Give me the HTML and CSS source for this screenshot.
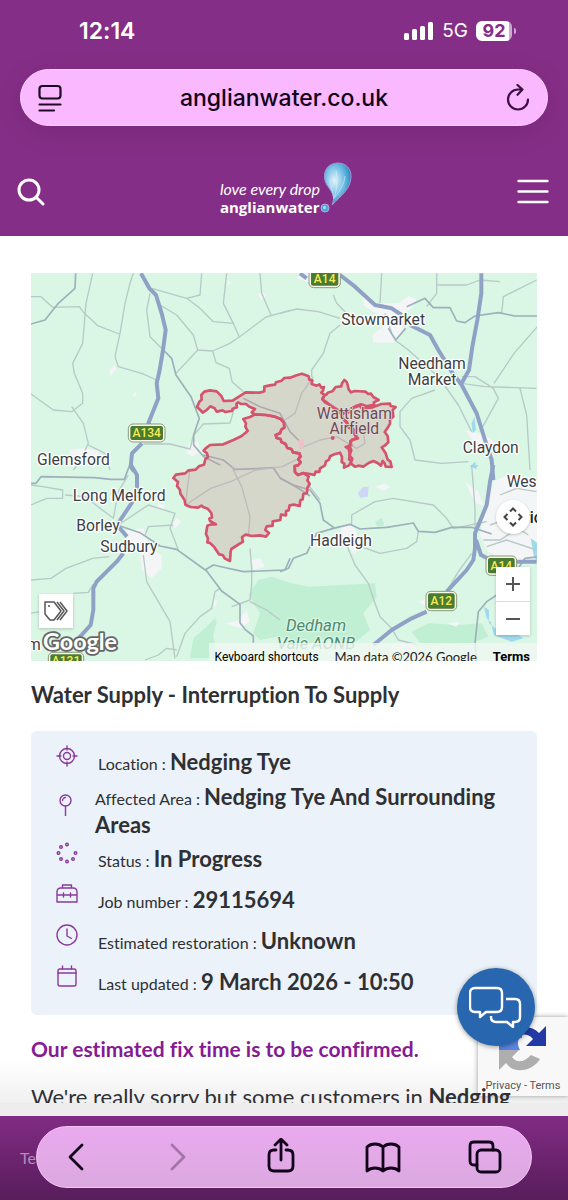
FILE: index.html
```html
<!DOCTYPE html>
<html lang="en">
<head>
  <meta charset="UTF-8">
  <meta name="viewport" content="width=device-width, initial-scale=1.0">
  <title>Water Supply - Interruption To Supply | Anglian Water</title>
  <link rel="stylesheet" href="styles.css">
</head>
<body>
  <div class="phone">
    <header class="top">
      <div class="status-bar">
        <span class="time">12:14</span>
        <div class="status-icons">
          <svg width="30" height="18" viewBox="0 0 30 18" fill="#fff"><rect y="11" width="5" height="7" rx="1.5"/><rect x="8" y="7" width="5" height="11" rx="1.5"/><rect x="16" y="4" width="5" height="14" rx="1.5"/><rect x="24" width="5" height="18" rx="1.5"/></svg>
          <span class="network">5G</span>
          <span class="battery">92</span>
        </div>
      </div>

      <div class="address-bar">
        <button class="icon-btn" aria-label="Page menu">
          <svg width="24" height="28" viewBox="0 0 24 28" fill="none" stroke="#1c0a20" stroke-width="2.2" stroke-linecap="round"><rect x="1.5" y="2" width="21" height="12.5" rx="3"/><path d="M1.5 20.500h21M1.5 26.500h14.5"/></svg>
        </button>
        <input class="url" type="text" value="anglianwater.co.uk" aria-label="Address">
        <button class="icon-btn" aria-label="Reload">
          <svg width="24" height="28" viewBox="0 0 24 28" fill="none" stroke="#3d1144" stroke-width="2.2" stroke-linecap="round" stroke-linejoin="round"><path d="M22 15.500a10 10 0 1 1-10-10h4M11.500 1l5 4.600-5 5.200"/></svg>
        </button>
      </div>

      <div class="site-nav">
        <button class="icon-btn" aria-label="Search">
          <svg width="28" height="28" viewBox="0 0 28 28" fill="none" stroke="#fff" stroke-width="3" stroke-linecap="round"><circle cx="12" cy="12" r="10"/><path d="M19.500 19.500L26 26"/></svg>
        </button>
        <a class="logo" href="#" aria-label="Anglian Water home">
          <span class="logo-text">
            <span class="logo-tag">love every drop</span>
            <span class="logo-name">anglianwater</span>
          </span>
          <svg class="drop" width="32" height="52" viewBox="0 0 32 52">
            <defs>
              <radialGradient id="drop" cx=".38" cy=".42" r=".6"><stop offset="0" stop-color="#e2f4fc"/><stop offset=".45" stop-color="#8dcbea"/><stop offset="1" stop-color="#2b93c9"/></radialGradient>
            </defs>
            <path d="M18 1C26 1 31.500 7 31 15c-.5 12-9 18-19 28 3-8 1-11-3-17C6 22 4 18 4.500 13 5 6 10 1 18 1z" fill="url(#drop)" stroke="#a98fd0"/>
            <path d="M10 16c0 9 3 13 4 21M16 9c2 10 1 18-2 27M25 14c-1 9-5 14-10 21" fill="none" stroke="#d9f1fb" opacity=".6"/>
            <circle cx="5" cy="46" r="4" fill="#4aa9d8" stroke="#b7a3da"/>
            <circle cx="4.500" cy="45.500" r="1.500" fill="#a9e2f7"/>
          </svg>
        </a>
        <button class="icon-btn" aria-label="Menu">
          <svg width="32" height="26" viewBox="0 0 32 26" stroke="#fff" stroke-width="2.4" stroke-linecap="round"><path d="M1.500 2h29M1.500 12.500h29M1.500 23h29"/></svg>
        </button>
      </div>
    </header>

    <main class="content">
      <div class="map">
        <svg class="map-art" viewBox="0 0 1518 1164" role="img" aria-label="Map of the affected area">
          <rect width="1518" height="1164" fill="#daf6e4"/>

          <!-- woodland and towns -->
          <g transform="translate(-3 576)">
            <path class="wood" d="M655 390l30-45 40-10 60 20 50 10 200-10 5 40-40 50 20 50-60 50-60-30-60 20-100-20-50 10-20-20 20-60-35-55zM480 580l10-60 40-35 25-25 5 10-10 40 10 70z"/>
            <path class="wood" d="M1145 500l50-25 90 5 70-5 20 40-50 20-150 5z"/>
            <path class="town" d="M290 195l50-5 20 60 35 20v40l-30 30-30-25-5-55-45-20zM385 115l20 5-5 15-20-5zM425 180l15-20 15 10-20 20zM665 285l25-5 15 25-35 10zM550 400l12 10-10 20zM585 475l40-8 25-32 8 35-25 20z"/>
          </g>
          <g transform="translate(747 576)">
            <path class="town" d="M180 185l40-8 20 55-15 35-25-25zM340 535l50-5 30 30h-90zM640 50l40-20 94 10v240l-90 10-60-30-25-50zM415 410l25-10v25zM500 475l40-5-10 15zM555 50l40 30 15 40-25-5zM285 65l30-10 15 12-20 10z"/>
            <path class="lake" d="M570 0h25l-8 12zM612 425l15 10v40l25 20 10 20-20-5-10-40-12-10zM752 220l22 15v60l-12-20zM640 510l60-10 30 20-35 10z"/>
            <path d="M233 85l15-18 18-2-3 30-22 3z" fill="#cdd6f3"/>
            <path class="wood" d="M285 170l20-10 8 20-20 5z"/>
          </g>
          <g transform="translate(747 -9)">
            <path class="town" d="M245 65l40 35 70 0 30-22 25 10-15 25-30 20 5 50-30 35h-60l-3-25 30-20 0-30-55-35zM50 25l15-15h28v30zM555 480l60 15 40 30-70-5z"/>
            <path class="lake" d="M575 460l8-20 5 40-10 10zM570 590l15-15 5 20z"/>
          </g>
          <path class="town" d="M115 530l45-5 45 10-5 20h-80zM465 540l10-30 25-5 10 30-25 15zM235 295l15-20 8 10-20 25zM305 365l10-8 3 10-12 6zM680 62l15-5 10 12-15 12zM590 20l10 10-12 8z"/>

          <g transform="translate(-3 -9)">
            <path class="road" d="M3 80l30 0 35 32 80-2 15 20 25 22 15 15 65 25M188 10l-20 90-10 120-30 60 5 30 25 60v30l-33 25-55-5-70-50M125 410l35 50 15 60-25 55-20 25M175 525l50 25 15 50M310 10l-10 30-15 60-15 90-15 70 10 30 70 20 45 20M360 70l-10 50 10 80 40 40M365 55l105 30 40 30 40 40 60 5M515 10l-5 65-40 10M390 105l50 30 50 60 13 45-65 70M503 240l45 3 50-22 30-20 80-60 72-20M590 10l-10 90 30 60 18 42M690 10l5 60 28 65M548 243l10 35 40 17 8 40 35 30M340 522h80l60 15 10-40 30-35 80-3 15-50"/>
            <path class="road dark" d="M137 10l-2 45-50 45-40 50-42 12M400 240l25 25 13 50 45 65 25 65-17 50 0 30 30 35 50 25"/>
            <path class="main-road" d="M333 10l25 45 20 20 17 55 12 50-8 60-10 60-9 40 5 45-18 45-12 30 15 22M336 520l-30 30-4 40 10 14"/>
          </g>
          <g transform="translate(747 -9)">
            <path class="road" d="M0 130l50-13 65 8 65 20M180 165l-30 25-20 60-35 50 0 20M160 75l10 25 40 40M305 10l-5 90M470 10v60l-30 40M470 45h90l40-15 60 5M770 30l-40 20-60 30-5 50M772 170l-70 80-60 90M545 340l70 10 155 5M545 320l40 0 55 35 15 30-55 100M720 355l20 80 10 165M465 360l-70 25-35 40v45l30 40 15 60 80 10 80-5M345 210l40 30 90 80 60 85 40 80M315 130l20 60"/>
            <path class="road dark" d="M380 110l55-25 25 28h50l20 40 25 5 30-20 70-10 50 10h67M325 175l22 35 30-35"/>
            <path class="main-road" d="M60 10l20 15M180 15l45 35 60 55 50 10 30 20M390 165l60 30 25 45 40 65 30 40 45 85 25 80 20 60 5 60M604 10v60l-12 80-15 80-10 70-22 40"/>
          </g>
          <g transform="translate(-3 576)">
            <path class="road" d="M3 60l35 5 60 10v25H50l-47 20M105 90l60 5 85 65 15-80 30-50M265 180l90-60 80 25-15 45 25 65M345 210l10-25 75-5M3 345l60-5 45-30 80-30 50-5M130 385l45-3 15-25M340 270l10 80 35 60 35 60 15 110M440 575l25-70 45-50 35-25 10-50 15-10M660 250l5 60 0 50-5 45-55 20M660 410l50 25 40 30M3 445l50-10M345 585l40-15 25-20 30 5"/>
            <path class="road dark" d="M3 55h15l15-20 160 3 50 5h40l15-40M270 183l60 20 60 40 50 10 90 65 45 60 55 40 0 55 15 20 25 20 0 20M525 315l25-15 90 20 125-5 15-35"/>
            <path class="main-road" d="M303 0l18 30 0 60-50 75-10 15 30 35M280 265l-20 25-60 60-10 20v65l-8 45-50 55"/>
          </g>
          <g transform="translate(747 576)">
            <path class="road" d="M85 60l35 45M215 180v-30l70-40 55-10 120 20 40 40 20 30 100-20M230 240l70 25 80-15 30-20 5-30M200 240l25 60 40 55 20 60 15 40 35 35 20 35 60 15M575 0l10 130 0 60M500 380l35-60 40-55M610 225l50 0 55-35 30 20M620 245l60-20 90 30M630 180l60-20 80 10M660 90l50-20 60 10"/>
            <path class="road dark" d="M0 320l25-10 15-30 40-15 30-60 50-15 50-12 30 14 80-5 80-13 15 25 50 3 50-15h60l60 20M0 40l40 20 50 15 30 40 10 50 35 25M590 585l-5-50 10-95 25-30 30-20M715 310l20-30 40-5"/>
            <path class="main-road" d="M640 0l-10 50-10 70-35 85v45l-5 35-20 30-60 65M440 440l-45 20-60 35-55 45M588 225l15 45 40 20h127"/>
          </g>

          <!-- affected areas -->
          <g transform="translate(387 261)">
            <path class="road dark" d="M130 285l60 15 35 28 65-2 50-3 20 30 60 35 30 20M250 115l50 25 60 20 30 55 35 35"/>
            <path class="road" d="M90 325l-8 60-5 50 75-50 60-20 75-35 80-10 60-30M215 320l30 60 25 90-5 60M460 50l-35 50-20 60-30 20M420 265l60-25 50-10 60 35 25-15-5-35"/>
            <path class="area" d="M285 163L318 165 345 170 362 177 372 188 373 203 364 209 360 220 347 225 350 234 362 237 364 246 376 251 382 264 394 267 399 277 418 280 420 289 415 298 422 307 414 316 404 318 405 336 414 345 430 339 446 350 442 361 449 372 442 384 441 399 430 402 428 418 421 421 419 438 402 434 389 436 386 451 378 453 378 466 363 464 361 480 338 484 338 497 320 499 316 510 327 519 318 530 300 526 276 528 257 524 246 531 249 545 214 567 212 575 210 603 195 596 188 585 177 583 162 560 150 549 142 547 144 535 138 522 142 497 155 493 168 493 150 483 148 476 156 472 154 459 143 446 131 442 124 437 114 443 92 441 76 434 74 421 66 408 61 401 60 390 51 378 54 366 40 354 48 344 76 340 84 332 107 329 118 318 132 314 136 298 144 291 141 280 131 272 137 265 150 255 190 253 220 240 245 228 263 213 256 200 258 190 250 177 270 171z"/>
            <path class="area" d="M285 163L275 157 285 147 268 140 258 132 244 132 234 127 229 132 231 142 218 146 216 153 195 156 188 151 170 155 164 145 151 139 140 150 128 158 121 150 111 141 118 125 125 119 124 105 133 95 150 91 170 94 184 108 191 123 218 122 257 97 298 98 313 94 313 80 329 76 345 74 348 67 365 62 373 54 390 53 410 46 426 41 446 49 448 59 457 61 455 72 470 77 478 73 484 83 492 81 489 92 484 98 494 105 487 117 495 127 512 136 522 142 540 154 545 168 555 183 562 192 567 204 580 208 589 224 586 237 571 243 574 256 557 261 566 267 570 284 567 298 574 304 567 316 552 323 553 311 545 306 546 291 540 278 523 283 510 289 507 299 498 304 495 316 480 325 478 336 467 335 463 345 450 342 430 339 414 345 405 336 404 318 414 316 422 307 415 298 422 289 418 280 399 277 394 267 382 264 376 251 364 246 362 237 350 234 347 225 360 220 364 209 373 203 372 188 362 177 345 170 318 165z"/>
            <path class="area" d="M499 104L503 98 517 94 527 81 544 79 546 70 553 60 560 66 563 75 566 88 573 97 584 93 616 95 625 102 633 101 640 111 656 120 641 127 643 134 620 139 603 133 590 137 577 144 565 156 545 156 522 145 500 127 487 118 494 105z"/>
            <path class="area" d="M565 157L580 143 598 137 606 145 638 142 664 132 690 131 692 138 707 141 698 150 700 170 690 178 690 191 682 205 674 216 683 228 685 247 674 257 665 262 677 280 683 299 691 304 695 321 677 320 673 308 668 303 663 317 651 308 640 303 626 309 610 320 595 317 585 320 572 310 577 296 568 286 574 271 568 257 576 239 594 235 583 223 580 207 566 200 561 187 544 171 547 162z"/>
            <path d="M415 240l15-3 3 25-15 5zM520 195l15-5 3 15-15 5z" fill="#edc0ca"/>
            <circle cx="518" cy="234" r="6" fill="#d5536c"/>
          </g>

          <g class="shield" transform="translate(292 453)"><rect width="110" height="54" rx="14"/><rect class="sign" x="6" y="6" width="98" height="42" rx="6"/><text x="55" y="39">A134</text></g>
          <g class="shield" transform="translate(834 -10)"><rect width="94" height="54" rx="14"/><rect class="sign" x="6" y="6" width="82" height="42" rx="6"/><text x="47" y="39">A14</text></g>
          <g class="shield" transform="translate(1185 955)"><rect width="92" height="58" rx="14"/><rect class="sign" x="6" y="6" width="80" height="46" rx="6"/><text x="46" y="41">A12</text></g>
          <g class="shield" transform="translate(1365 849)"><rect width="92" height="58" rx="14"/><rect class="sign" x="6" y="6" width="80" height="46" rx="6"/><text x="46" y="41">A14</text></g>
          <g class="shield" transform="translate(52 1138)"><rect width="106" height="54" rx="14"/><rect class="sign" x="6" y="6" width="94" height="42" rx="6"/><text x="53" y="39">A131</text></g>

          <g class="place">
            <text x="18" y="575">Glemsford</text>
            <text x="931" y="157">Stowmarket</text>
            <text x="1203" y="289" text-anchor="middle">Needham</text>
            <text x="1203" y="336" text-anchor="middle">Market</text>
            <text class="soft" x="970" y="437" text-anchor="middle">Wattisham</text>
            <text class="soft" x="970" y="484" text-anchor="middle">Airfield</text>
            <text x="1295" y="541">Claydon</text>
            <text x="125" y="684">Long Melford</text>
            <text x="136" y="775">Borley</text>
            <text x="208" y="837">Sudbury</text>
            <text x="837" y="820">Hadleigh</text>
            <text x="1427" y="642">West</text>
            <text class="city" x="1480" y="750">rich</text>
            <text x="-12" y="1132">m</text>
            <text class="park" x="855" y="1074" text-anchor="middle">Dedham</text>
            <text class="park" x="855" y="1128" text-anchor="middle">Vale AONB</text>
          </g>
          <text class="google" x="36" y="1132">Google</text>
        </svg>

        <button class="map-btn tags" aria-label="Labels">
          <svg width="26" height="24" viewBox="0 0 26 24" fill="none" stroke="#555" stroke-width="1.5" stroke-linejoin="round"><path d="M2 3l9 0 7 9-7 9-4 0-5-6zM14 3l7 9-7 9M17 3l7 9-7 9"/><circle cx="6" cy="7" r="1" fill="#555" stroke="none"/></svg>
        </button>
        <button class="map-btn camera" aria-label="Map camera controls">
          <svg width="20" height="20" viewBox="0 0 20 20" fill="none" stroke="#444" stroke-width="2"><path d="M7 4.500l3-3 3 3M7 15.500l3 3 3-3M4.500 7l-3 3 3 3M15.500 7l3 3-3 3"/></svg>
        </button>
        <div class="zoom">
          <button class="map-btn" aria-label="Zoom in"><svg width="14" height="14" viewBox="0 0 14 14" stroke="#555" stroke-width="2"><path d="M0 7h14M7 0v14"/></svg></button>
          <button class="map-btn" aria-label="Zoom out"><svg width="14" height="14" viewBox="0 0 14 14" stroke="#555" stroke-width="2"><path d="M0 7h14"/></svg></button>
        </div>
        <div class="attribution">
          <button class="shortcuts">Keyboard shortcuts</button>
          <span class="map-data">Map data ©2026 Google</span>
          <a href="#">Terms</a>
        </div>
      </div>

      <h1>Water Supply - Interruption To Supply</h1>

      <ul class="details">
        <li>
          <svg class="icon" viewBox="0 0 22 22"><circle cx="11" cy="11" r="7.500"/><circle cx="11" cy="11" r="3.500"/><path d="M11 1v4M11 17v4M1 11h4M17 11h4"/></svg>
          <p>Location : <strong>Nedging Tye</strong></p>
        </li>
        <li class="long">
          <svg class="icon" viewBox="0 0 22 22"><circle cx="9.500" cy="6.500" r="5.500"/><path d="M9.500 12v10M6.500 6.500a3 3 0 0 1 3-3"/></svg>
          <p>Affected Area : <strong>Nedging Tye And Surrounding Areas</strong></p>
        </li>
        <li>
          <svg class="icon" viewBox="0 0 22 22"><circle cx="11" cy="2.500" r="1.300"/><circle cx="5" cy="5" r="1.300"/><circle cx="2.500" cy="11" r="1.300"/><circle cx="5" cy="17" r="1.300"/><circle cx="11" cy="19.500" r="1.300"/><circle cx="17" cy="17" r="1.300"/><circle cx="19.500" cy="11" r="1.300"/></svg>
          <p>Status : <strong>In Progress</strong></p>
        </li>
        <li>
          <svg class="icon" viewBox="0 0 22 22"><path d="M6.500 5V2h9v3M1 12V9q0-4 4-4h12q4 0 4 4v3M1 12h20v7H1zM7.500 10v4M14.500 10v4"/></svg>
          <p>Job number : <strong>29115694</strong></p>
        </li>
        <li>
          <svg class="icon" viewBox="0 0 22 22"><circle cx="11" cy="11" r="10"/><path d="M11 5v7l4.500 2.500"/></svg>
          <p>Estimated restoration : <strong>Unknown</strong></p>
        </li>
        <li>
          <svg class="icon" viewBox="0 0 22 22"><rect x="2" y="4" width="18" height="17" rx="2"/><path d="M2 8h18M6.500 1v3M15.500 1v3"/></svg>
          <p>Last updated : <strong>9 March 2026 - 10:50</strong></p>
        </li>
      </ul>

      <h2>Our estimated fix time is to be confirmed.</h2>
      <p class="message">We're really sorry but some customers in <strong>Nedging</strong></p>

      <div class="recaptcha">
        <svg width="48" height="48" viewBox="0 0 48 48">
          <path d="M10 10C15 3 30 -2 40 8l7-7v20H27l7-7c-4-5-9-5-12-4z" fill="#2339a6"/>
          <path d="M0 25V8l5 5c4-6 10-9 18-9v9c-5 0-5 6-2 12z" fill="#5b83e3"/>
          <path d="M0 25h20l-7 7c5 7 12 5 19-2l9 4C34 46 15 50 7 38l-7 7z" fill="#aeaeae"/>
        </svg>
        <p><a href="#">Privacy</a> - <a href="#">Terms</a></p>
      </div>
      <button class="chat" aria-label="Open chat">
        <svg width="54" height="42" viewBox="0 0 54 42" fill="none" stroke="#fff" stroke-width="2.4" stroke-linejoin="round"><path d="M6 2h22q5 0 5 5v14q0 5-5 5H17l-6 5v-5H6q-5 0-5-5V7q0-5 5-5z"/><path d="M37 13h9q5 0 5 5v13q0 5-5 5h-2v5l-6-5H27q-5 0-5-5v-1"/></svg>
      </button>
    </main>

    <footer class="bottom">
      <span class="behind">Te</span>
      <nav class="toolbar">
        <button aria-label="Back"><svg width="36" height="38" viewBox="0 0 36 38"><path d="M24 7L12 19l12 12"/></svg></button>
        <button class="off" aria-label="Forward" disabled><svg width="36" height="38" viewBox="0 0 36 38"><path d="M12 7l12 12-12 12"/></svg></button>
        <button aria-label="Share"><svg width="36" height="38" viewBox="0 0 36 38"><path d="M13 12h-2q-5 0-5 5v11q0 5 5 5h14q5 0 5-5V17q0-5-5-5h-2M18 22V2M12 7l6-6 6 6"/></svg></button>
        <button aria-label="Bookmarks"><svg width="36" height="38" viewBox="0 0 36 38"><path d="M18 9v24M18 9C14 5 6 5 2 9v24c4-4 12-4 16 0 4-4 12-4 16 0V9C30 5 22 5 18 9z"/></svg></button>
        <button aria-label="Tabs"><svg width="36" height="38" viewBox="0 0 36 38"><rect x="10" y="12" width="23" height="22" rx="4"/><path d="M10 27H7q-4 0-4-4V8q0-4 4-4h15q4 0 4 4v4"/></svg></button>
      </nav>
    </footer>
  </div>
</body>
</html>
```
FILE: styles.css
```css
* { box-sizing: border-box; }
body { margin: 0; font-family: Lato, sans-serif; font-variant-ligatures: none; color: #2f3033; background: #fff; }
button { border: none; background: none; padding: 0; font: inherit; cursor: pointer; }
svg { display: block; }
a { color: inherit; text-decoration: none; }
.phone { height: 100vh; display: flex; flex-direction: column; overflow: hidden; }

/* header */
.top { background: #852e87; font-family: Inter, sans-serif; }
.status-bar { display: flex; justify-content: space-between; align-items: center; height: 61px; padding: 0 56px 0 79px; color: #fff; }
.time { font-size: 23px; font-weight: 600; }
.status-icons { display: flex; align-items: center; gap: 8px; }
.network { font-size: 19px; }
.battery { position: relative; width: 36px; height: 20px; border-radius: 6px; background: linear-gradient(90deg, #fff 92%, #cfa8d1 92%); color: #852e87; font-size: 18px; font-weight: 700; line-height: 20px; text-align: center; }
.battery::after { content: ""; position: absolute; left: 38px; top: 7px; width: 2px; height: 6px; border-radius: 0 2px 2px 0; background: #cfa8d1; }
.address-bar { display: flex; align-items: center; height: 57px; margin: 8px 20px 0; padding: 0 17px; border: 1px solid #ffd0ff; border-radius: 29px; background: #fab8fe; box-shadow: 0 6px 24px rgba(60, 10, 70, 0.15); }
.url { flex: 1; min-width: 0; border: none; background: none; text-align: center; font-family: Inter, sans-serif; font-size: 23px; font-weight: 500; color: #120016; }
.site-nav { display: flex; justify-content: space-between; align-items: center; height: 110px; padding: 22px 19px 0 17px; }
.logo { display: flex; align-items: center; margin: 0 0 8px 10px; color: #fff; }
.logo-text { display: flex; flex-direction: column; padding-top: 18px; }
.logo-tag { font-family: Lato, sans-serif; font-style: italic; font-size: 16px; line-height: 19px; }
.logo-name { font-family: "Open Sans", sans-serif; font-weight: 700; font-size: 15px; line-height: 18px; }

/* page */
.content { position: relative; flex: 1; min-height: 0; overflow: hidden; padding: 37px 31px 0; background: linear-gradient(#fff 95%, #f0f0f0); }
h1, h2 { margin: 20px 0; font-size: 21px; line-height: 28px; font-weight: 700; }
h1 { margin-bottom: 22px; font-size: 22px; }
h2 { color: #861b93; }
.message { position: relative; z-index: 1; margin: 0; font-size: 22px; line-height: 28px; white-space: nowrap; }

/* map */
.map { position: relative; overflow: hidden; font-family: Roboto, sans-serif; }
.map-art { width: 100%; height: auto; }
.wood { fill: #c0efd3; }
.town { fill: #f3f5f6; }
.lake { fill: #9fd9ee; }
.road { fill: none; stroke: #b7c9c8; stroke-width: 4; stroke-linejoin: round; }
.dark { stroke: #9db0bb; stroke-width: 5; }
.main-road { fill: none; stroke: #8fa2c6; stroke-width: 12; stroke-linejoin: round; }
.area { fill: #cf9f9f; fill-opacity: 0.35; stroke: #d5536c; stroke-width: 8; stroke-linejoin: round; }
.shield rect { fill: #fbfae8; stroke: #8c987c; stroke-width: 3; }
.shield .sign { fill: #487c32; stroke: none; }
.shield text { fill: #f6ea55; font-size: 36px; font-weight: 500; text-anchor: middle; }
.place text { font-size: 47px; fill: #3c4043; stroke: #fff; stroke-width: 8; stroke-linejoin: round; paint-order: stroke; }
.place .soft { fill: #6c4c55; stroke: #e3dcd8; stroke-width: 5; }
.place .park { fill: #4f8a70; stroke: #daf6e4; font-size: 50px; font-style: italic; }
.place .city { fill: #202124; font-weight: 500; }
.google { font-family: Lato, sans-serif; font-size: 70px; font-weight: 700; fill: #fff; stroke: #666; stroke-width: 11; stroke-linejoin: round; paint-order: stroke; }
.map-btn { display: flex; align-items: center; justify-content: center; width: 34px; height: 34px; background: #fff; }
.tags { position: absolute; left: 8px; bottom: 33px; box-shadow: 0 1px 3px rgba(0, 0, 0, 0.2); }
.camera { position: absolute; right: 7px; bottom: 127px; border-radius: 50%; box-shadow: 0 1px 3px rgba(0, 0, 0, 0.2); }
.zoom { position: absolute; right: 7px; bottom: 26px; background: #fff; box-shadow: 0 1px 3px rgba(0, 0, 0, 0.2); }
.zoom .map-btn + .map-btn { border-top: 1px solid #ddd; }
.attribution { position: absolute; right: 0; bottom: 0; display: flex; gap: 16px; height: 18px; padding: 0 7px 0 6px; background: rgba(240, 248, 243, 0.8); font-size: 12px; line-height: 28px; color: #222; }
.shortcuts { height: 28px; font-family: Roboto, sans-serif; color: #000; }
.map-data { font-family: Lato, sans-serif; font-size: 13px; }
.attribution a { color: #000; font-size: 13px; font-weight: 700; }

/* incident details */
.details { margin: 0; padding: 13px 25px 10px; list-style: none; background: #ebf2f9; border-radius: 6px; }
.details li { display: flex; align-items: center; gap: 20px; padding: 6px 0 7px; }
.details .long { gap: 17px; padding: 0; }
.details p { margin: 0; font-size: 16px; line-height: 28px; }
.details strong { font-size: 22px; line-height: 22px; }
.icon { flex: none; width: 22px; height: 22px; margin: -8px 0 8px; fill: none; stroke: #8b3a9c; stroke-width: 1.4; stroke-linejoin: round; stroke-linecap: round; }

/* floating widgets */
.recaptcha { position: absolute; right: 0; bottom: 7px; width: 90px; height: 79px; padding-top: 8px; background: #f8f8f8; box-shadow: 0 0 5px #999; font-family: Roboto, sans-serif; font-size: 11px; }
.recaptcha svg { margin: 0 auto; }
.recaptcha p { margin: 6px 0 0; line-height: 14px; text-align: center; color: #555; }
.chat { position: absolute; right: 33px; bottom: 57px; display: flex; align-items: center; justify-content: center; width: 78px; height: 78px; border-radius: 50%; background: #2867b0; box-shadow: 0 1px 5px rgba(0, 0, 0, 0.4); }

/* browser toolbar */
.bottom { display: flex; align-items: center; height: 97px; padding: 0 36px 2px 20px; border-top: 13px solid #ededed; background: linear-gradient(#812b84, #581d5b); }
.behind { width: 16px; font-size: 16px; color: #b58bb8; }
.toolbar { flex: 1; display: flex; align-items: center; justify-content: space-between; height: 62px; padding: 0 28px 0 21px; border: 1px solid #f3c4f6; border-radius: 31px; background: linear-gradient(#eaa9ef, #dba9e0); }
.toolbar svg { fill: none; stroke: #12001a; stroke-width: 2.8; stroke-linecap: round; stroke-linejoin: round; }
.toolbar .off { opacity: 0.3; }
```
